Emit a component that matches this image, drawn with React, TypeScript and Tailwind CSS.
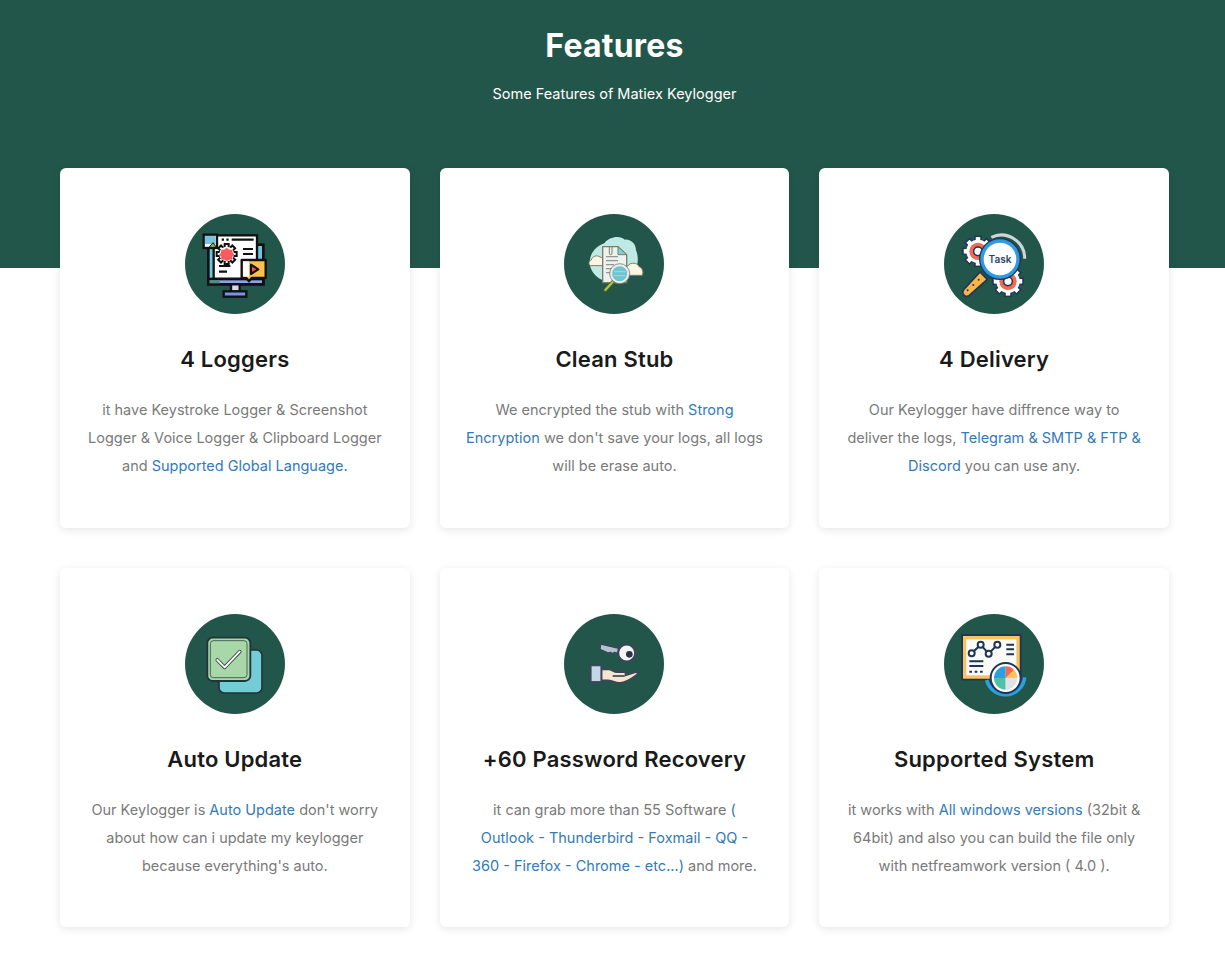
const INK = "#111111";
const NAVY = "#1d3557";

function IconLoggers() {
  const gear = Array.from({ length: 8 }, (_, i) => i * 45);
  return (
    <svg viewBox="30 30 300 300" className="w-[100px] h-[100px]">
      <rect x="100" y="122" width="165" height="118" fill="#6ec6e0" stroke={INK} strokeWidth="8" />
      <rect x="100" y="225" width="165" height="16" fill="#8ea2ef" stroke={INK} strokeWidth="8" />
      <rect x="104" y="229" width="30" height="9" fill="#4d8f7a" />
      <rect x="168" y="241" width="26" height="22" fill="#d5dbe6" stroke={INK} strokeWidth="7" />
      <rect x="146" y="262" width="68" height="16" fill="#7a93e8" stroke={INK} strokeWidth="7" />
      <rect x="116" y="94" width="130" height="130" fill="#ffffff" stroke={INK} strokeWidth="7" />
      <path d="M140 107h7M154 107h7M170 107h66M204 135h30M204 150h30M132 186h34M132 203h24" stroke={INK} strokeWidth="6.5" fill="none" />
      {gear.map((a) => (
        <rect key={a} x="149" y="120" width="12" height="14" fill="#ffffff" stroke={INK} strokeWidth="6" transform={`rotate(${a} 155 150)`} />
      ))}
      <circle cx="155" cy="150" r="22" fill="#ffffff" />
      <path d="M155 131l8 6 9 0 1 9 5 6-6 6-1 9-9 0-7 5-7-5-9 0-1-9-5-6 5-6 1-9 9 0z" fill="#fb5a5f" />
      <rect x="86" y="92" width="40" height="40" fill="#ffffff" stroke={INK} strokeWidth="7" />
      <rect x="90" y="96" width="32" height="24" fill="#79c5e0" />
      <path d="M102 130l12-14 10 14z" fill="#7ec850" stroke={INK} strokeWidth="3" />
      <path d="M200 168h72v54h-42l-8 10-8-10h-14z" fill="#ffc04d" stroke={INK} strokeWidth="7" strokeLinejoin="round" />
      <rect x="204" y="172" width="18" height="46" fill="#ffffff" />
      <path d="M228 182l22 14-22 14z" fill="#f5565b" stroke={INK} strokeWidth="6.5" strokeLinejoin="round" />
    </svg>
  );
}

function IconStub() {
  const ln = "#7d7d68";
  return (
    <svg viewBox="30 30 300 300" className="w-[100px] h-[100px]">
      <path d="M108 165c5-26 24-40 44-48 12-18 46-24 60-10 20-2 34 14 34 32 10 22 6 56-12 72-24 14-56 24-86 18-24-8-46-34-40-64z" fill="#bfe9e4" />
      <path d="M110 185c-8-2-6-15 2-17 2-12 18-16 26-9 8 0 14 12 10 26z" fill="#fbf5e4" stroke={ln} strokeWidth="3" />
      <path d="M215 214c-8-4-4-26 8-30 8-10 28-8 32 4 10 2 14 16 10 26z" fill="#fbf5e4" stroke={ln} strokeWidth="3" />
      <path d="M146 128h46l26 24v84h-72z" fill="#eef2ef" stroke={ln} strokeWidth="4" strokeLinejoin="round" />
      <path d="M192 128l26 24h-26z" fill="#7fd1d8" stroke={ln} strokeWidth="3" strokeLinejoin="round" />
      <path d="M156 158h36M156 170h36M156 182h24M156 194h20M156 206h18" stroke="#8f9895" strokeWidth="3.5" />
      <path d="M166 128v20a4 4 0 0 0 8 0v-22" stroke={ln} strokeWidth="3" fill="none" />
      <path d="M176 234l-22 24" stroke="#5f6620" strokeWidth="11" strokeLinecap="round" />
      <path d="M176 234l-22 24" stroke="#9ecb4a" strokeWidth="6" strokeLinecap="round" />
      <circle cx="197" cy="209" r="26" fill="#6fc5cf" stroke="#e8efee" strokeWidth="7" />
      <circle cx="197" cy="209" r="30" fill="none" stroke={ln} strokeWidth="2.5" />
      <path d="M180 203h34M180 215h34" stroke="#9cdde3" strokeWidth="3" />
    </svg>
  );
}

function Gear({ cx, cy, r }: { cx: number; cy: number; r: number }) {
  const teeth = Array.from({ length: 8 }, (_, i) => i * 45);
  return (
    <g>
      {teeth.map((a) => (
        <rect key={a} x={cx - 9} y={cy - r - 10} width="18" height="18" fill="#ffffff" stroke={NAVY} strokeWidth="4.5" transform={`rotate(${a} ${cx} ${cy})`} />
      ))}
      <circle cx={cx} cy={cy} r={r} fill="#ffffff" />
      <circle cx={cx} cy={cy} r={r - 9} fill="#f4694f" />
      <circle cx={cx} cy={cy} r={r - 22} fill="#ffffff" stroke={NAVY} strokeWidth="4.5" />
    </g>
  );
}

function IconDelivery() {
  return (
    <svg viewBox="30 30 300 300" className="w-[100px] h-[100px]">
      <Gear cx={132} cy={142} r={35} />
      <Gear cx={222} cy={232} r={35} />
      <path d="M172 100a70 70 0 0 1 100 64" fill="none" stroke="#cfd6db" strokeWidth="9" />
      <path d="M138 204l22 22-54 48c-8 6-18 2-20-8 0-4 2-8 5-11z" fill="#fbb645" stroke={NAVY} strokeWidth="5" strokeLinejoin="round" />
      <circle cx="101" cy="259" r="3" fill={NAVY} />
      <circle cx="118" cy="243" r="3" fill={NAVY} />
      <circle cx="134" cy="227" r="3" fill={NAVY} />
      <circle cx="198" cy="165" r="63" fill="#1d3557" />
      <circle cx="198" cy="165" r="59" fill="#2e9ae0" />
      <circle cx="198" cy="165" r="49" fill="#ffffff" />
      <text x="198" y="176" textAnchor="middle" fontFamily="Inter, sans-serif" fontWeight="600" fontSize="30" fill="#2c4560">Task</text>
    </svg>
  );
}

function IconUpdate() {
  return (
    <svg viewBox="30 30 300 300" className="w-[100px] h-[100px]">
      <rect x="132" y="138" width="129" height="129" rx="16" fill="#74cdd6" stroke="#22333b" strokeWidth="5" />
      <rect x="97" y="101" width="129" height="130" rx="16" fill="#a8d8a8" stroke="#22333b" strokeWidth="5.5" />
      <rect x="106" y="110" width="110" height="111" rx="9" fill="none" stroke="#33504a" strokeWidth="2.5" />
      <path d="M127 168l22 22 45-47" fill="none" stroke="#33403d" strokeWidth="11" strokeLinecap="round" strokeLinejoin="round" />
      <path d="M127 168l22 22 45-47" fill="none" stroke="#ffffff" strokeWidth="6" strokeLinecap="round" strokeLinejoin="round" />
    </svg>
  );
}

function IconPassword() {
  const d = "#3c4658";
  return (
    <svg viewBox="30 30 300 300" className="w-[100px] h-[100px]">
      <path d="M140 120l58 14-3 15-14-4-5 4-7-4-6 2-25-11z" fill="#b5c3d0" stroke={d} strokeWidth="4" strokeLinejoin="round" />
      <circle cx="218" cy="147" r="26" fill="#f4f6f4" stroke={d} strokeWidth="7" />
      <circle cx="226" cy="151" r="10" fill="#2b3444" />
      <path d="M142 196h22c10 0 14 8 26 8h20c6 0 6 6 4 10l28-9c8-2 12 4 6 8-14 10-30 24-50 24-16 0-26-8-36-8h-20z" fill="#f7e6cf" stroke={d} strokeWidth="5.5" strokeLinejoin="round" />
      <path d="M176 216h36" stroke={d} strokeWidth="5" />
      <rect x="110" y="184" width="32" height="50" fill="#c2d8e6" stroke={d} strokeWidth="5.5" />
    </svg>
  );
}

function IconSystem() {
  return (
    <svg viewBox="30 30 300 300" className="w-[100px] h-[100px]">
      <rect x="85" y="94" width="174" height="132" fill="#fbfbf7" stroke={NAVY} strokeWidth="7" />
      <rect x="92" y="101" width="160" height="118" fill="none" stroke="#fcc262" strokeWidth="10" />
      <path d="M113 148l27-26 24 27 26-27" fill="none" stroke={NAVY} strokeWidth="6" />
      <circle cx="113" cy="148" r="9" fill="#ffffff" stroke={NAVY} strokeWidth="6" />
      <circle cx="140" cy="122" r="9" fill="#ffffff" stroke={NAVY} strokeWidth="6" />
      <circle cx="164" cy="149" r="9" fill="#ffffff" stroke={NAVY} strokeWidth="6" />
      <circle cx="190" cy="122" r="9" fill="#ffffff" stroke={NAVY} strokeWidth="6" />
      <path d="M217 122h23M217 136h23M217 151h23M106 172h42M106 186h42M106 203h8M122 203h8M138 203h8" stroke={NAVY} strokeWidth="6" />
      <path d="M158 228a58 58 0 0 0 114 -8" fill="none" stroke="#2c9fdc" strokeWidth="11" />
      <circle cx="215" cy="222" r="45" fill="#ffffff" stroke={NAVY} strokeWidth="6" />
      <path d="M215 222v-35a35 35 0 0 0-35 35z" fill="#2f9fdc" />
      <path d="M215 222h-35a35 35 0 0 0 35 35z" fill="#4fc2a5" />
      <path d="M215 222v35a35 35 0 0 0 35-35z" fill="#e0e3e6" />
      <path d="M215 222h35a35 35 0 0 0-10-25z" fill="#fcc262" />
      <path d="M215 222l25-25a35 35 0 0 0-25-10z" fill="#f4694f" />
    </svg>
  );
}

function L({ children }: { children: React.ReactNode }) {
  return <span className="text-[#337ab7]">{children}</span>;
}

const cards = [
  {
    icon: <IconLoggers />,
    title: "4 Loggers",
    body: (
      <>
        it have Keystroke Logger &amp; Screenshot
        <br />
        Logger &amp; Voice Logger &amp; Clipboard Logger
        <br />
        and <L>Supported Global Language.</L>
      </>
    ),
  },
  {
    icon: <IconStub />,
    title: "Clean Stub",
    body: (
      <>
        We encrypted the stub with <L>Strong</L>
        <br />
        <L>Encryption</L> we don't save your logs, all logs
        <br />
        will be erase auto.
      </>
    ),
  },
  {
    icon: <IconDelivery />,
    title: "4 Delivery",
    body: (
      <>
        Our Keylogger have diffrence way to
        <br />
        deliver the logs, <L>Telegram &amp; SMTP &amp; FTP &amp;</L>
        <br />
        <L>Discord</L> you can use any.
      </>
    ),
  },
  {
    icon: <IconUpdate />,
    title: "Auto Update",
    body: (
      <>
        Our Keylogger is <L>Auto Update</L> don't worry
        <br />
        about how can i update my keylogger
        <br />
        because everything's auto.
      </>
    ),
  },
  {
    icon: <IconPassword />,
    title: "+60 Password Recovery",
    body: (
      <>
        it can grab more than 55 Software <L>(</L>
        <br />
        <L>Outlook - Thunderbird - Foxmail - QQ -</L>
        <br />
        <L>360 - Firefox - Chrome - etc...)</L> and more.
      </>
    ),
  },
  {
    icon: <IconSystem />,
    title: "Supported System",
    body: (
      <>
        it works with <L>All windows versions</L> (32bit &amp;
        <br />
        64bit) and also you can build the file only
        <br />
        with netfreamwork version ( 4.0 ).
      </>
    ),
  },
];

export default function App() {
  return (
    <div className="min-h-[960px] bg-white font-['Inter',sans-serif]">
      <header className="h-[268px] bg-[#23564a] pl-[60px] pr-[56px] text-center text-white">
        <h1 className="pt-[23px] text-[32px] leading-[46px] font-bold tracking-[0.2px]">Features</h1>
        <p className="mt-[13px] text-[14.5px] leading-[24px]">Some Features of Matiex Keylogger</p>
      </header>
      <main className="-mt-[100px] pl-[60px] pr-[56px] pb-[33px]">
        <div className="grid grid-cols-3 gap-x-[30px] gap-y-[40px]">
          {cards.map((c) => (
            <article
              key={c.title}
              className="h-[359.5px] rounded-[6px] bg-white pt-[46px] text-center shadow-[0_2px_8px_rgba(0,0,0,0.1)]"
            >
              <div className="mx-auto flex h-[100px] w-[100px] items-center justify-center rounded-full bg-[#23564a]">
                {c.icon}
              </div>
              <h3 className="mt-[29px] text-[22px] leading-[33px] font-semibold tracking-[0.2px] text-[#1a1a1a]">{c.title}</h3>
              <p className="mt-[20px] text-[14.5px] leading-[28px] text-[#7a7a7a]">{c.body}</p>
            </article>
          ))}
        </div>
      </main>
    </div>
  );
}
